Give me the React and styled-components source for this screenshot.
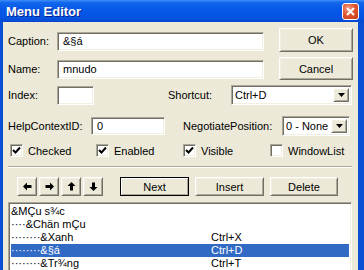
import styled, { createGlobalStyle } from 'styled-components';

const GlobalStyle = createGlobalStyle`
  body {
    margin: 0;
    background: #ece9d8;
    font-family: "Liberation Sans", Arial, sans-serif;
  }
`;

const menuItems = [
  { text: '&MÇu s¾c', level: 0, key: '' },
  { text: '&Chän mÇu', level: 1, key: '' },
  { text: '&Xanh', level: 2, key: 'Ctrl+X' },
  { text: '&§á', level: 2, key: 'Ctrl+D', selected: true },
  { text: '&Tr¾ng', level: 2, key: 'Ctrl+T' },
];

const ArrowIcon = ({ dir }) => {
  const rot = { left: 0, right: 180, up: 90, down: 270 }[dir];
  return (
    <svg width="9" height="9" viewBox="0 0 9 9" style={{ transform: `rotate(${rot}deg)` }}>
      <polygon points="0,4.5 4,0.5 4,3 8.5,3 8.5,6 4,6 4,8.5" fill="#000" />
    </svg>
  );
};

const DropArrow = () => (
  <svg width="7" height="4" viewBox="0 0 7 4">
    <polygon points="0,0 7,0 3.5,4" fill="#000" />
  </svg>
);

const Check = ({ checked, label }) => (
  <CheckItem>
    <Box>
      {checked && (
        <svg width="9" height="9" viewBox="0 0 9 9">
          <polyline points="1,4 3.5,6.5 8,1.5" fill="none" stroke="#000" strokeWidth="2" />
        </svg>
      )}
    </Box>
    {label}
  </CheckItem>
);

const Combo = ({ value, width }) => (
  <ComboBox $w={width}>
    <ComboText>{value}</ComboText>
    <ComboButton>
      <DropArrow />
    </ComboButton>
  </ComboBox>
);

const App = () => {
  return (
    <Window>
      <GlobalStyle />
      <TitleBar>
        <Title>Menu Editor</Title>
        <CloseButton>
          <svg width="9" height="9" viewBox="0 0 9 9">
            <path d="M1 1 L8 8 M8 1 L1 8" stroke="#fff" strokeWidth="2" />
          </svg>
        </CloseButton>
      </TitleBar>
      <Frame>
        <Top>
          <Fields>
            <Row>
              <Label $w={49}>Caption:</Label>
              <TextBox $w={207}>&amp;§á</TextBox>
            </Row>
            <Row>
              <Label $w={49}>Name:</Label>
              <TextBox $w={207}>mnudo</TextBox>
            </Row>
          </Fields>
          <ButtonCol>
            <Button $w={74} $h={24}>OK</Button>
            <Button $w={74} $h={23}>Cancel</Button>
          </ButtonCol>
        </Top>

        <Row $mt={5}>
          <Label $w={49}>Index:</Label>
          <TextBox $w={37} />
          <Label $w={63} $ml={74}>Shortcut:</Label>
          <Combo value="Ctrl+D" width={121} />
        </Row>

        <Row $mt={11}>
          <Label $w={83}>HelpContextID:</Label>
          <TextBox $w={74} $h={18}>0</TextBox>
          <Label $w={99} $ml={18}>NegotiatePosition:</Label>
          <Combo value="0 - None" width={68} />
        </Row>

        <CheckRow>
          <Check checked label="Checked" />
          <Check checked label="Enabled" />
          <Check checked label="Visible" />
          <Check label="WindowList" />
        </CheckRow>

        <Separator />

        <ToolRow>
          <ArrowGroup>
            <Button $w={20} $h={19}><ArrowIcon dir="left" /></Button>
            <Button $w={20} $h={19}><ArrowIcon dir="right" /></Button>
            <Button $w={20} $h={19}><ArrowIcon dir="up" /></Button>
            <Button $w={20} $h={19}><ArrowIcon dir="down" /></Button>
          </ArrowGroup>
          <ActionGroup>
            <Button $w={69} $h={19} $default>Next</Button>
            <Button $w={69} $h={19}>Insert</Button>
            <Button $w={68} $h={19}>Delete</Button>
          </ActionGroup>
        </ToolRow>

        <ListBox>
          {menuItems.map((item, i) => (
            <ListItem key={i} $selected={item.selected}>
              <ItemText>{'····'.repeat(item.level) + item.text}</ItemText>
              <ItemKey>{item.key}</ItemKey>
            </ListItem>
          ))}
        </ListBox>
      </Frame>
    </Window>
  );
};

const Window = styled.div`
  width: 364px;
  height: 270px;
  overflow: hidden;
  display: flex;
  flex-direction: column;
  font-size: 11px;
  color: #000;
`;

const TitleBar = styled.div`
  height: 22px;
  flex-shrink: 0;
  display: flex;
  align-items: center;
  justify-content: space-between;
  padding: 0 5px 0 6px;
  background: linear-gradient(
    to bottom,
    #3d8ff8 0%,
    #1266ec 12%,
    #0558e8 45%,
    #0552e0 85%,
    #0447cc 100%
  );
`;

const Title = styled.span`
  font-weight: bold;
  font-size: 13px;
  color: #fff;
  text-shadow: 1px 1px 0 #0a1f8c;
  padding-top: 1px;
`;

const CloseButton = styled.div`
  width: 15px;
  height: 15px;
  border: 1px solid #fff;
  border-radius: 3px;
  background: radial-gradient(circle at 35% 30%, #f0a08a 0%, #e0562f 45%, #c43a16 100%);
  display: flex;
  align-items: center;
  justify-content: center;
  margin-top: 1px;
`;

const Frame = styled.div`
  flex: 1;
  background: #ece9d8;
  border-left: 3px solid #0a4fd6;
  border-right: 6px solid #0a4fd6;
  padding: 6px 0 0 5px;
  display: flex;
  flex-direction: column;
  min-height: 0;
`;

const Top = styled.div`
  display: flex;
  align-items: flex-start;
`;

const Fields = styled.div`
  display: flex;
  flex-direction: column;
  gap: 8px;
  margin-top: 3px;
`;

const ButtonCol = styled.div`
  display: flex;
  flex-direction: column;
  gap: 5px;
  margin-left: 15px;
`;

const Row = styled.div`
  display: flex;
  align-items: center;
  height: 20px;
  margin-top: ${(p) => (p.$mt ? `${p.$mt}px` : '0')};
`;

const Label = styled.span`
  width: ${(p) => p.$w}px;
  margin-left: ${(p) => (p.$ml ? `${p.$ml}px` : '0')};
  flex-shrink: 0;
  white-space: nowrap;
`;

const sunken = `
  border: 1px solid;
  border-color: #aca899 #ffffff #ffffff #aca899;
  box-shadow: inset 1px 1px 0 #716f64, inset -1px -1px 0 #f1efe2;
  background: #fff;
  box-sizing: border-box;
`;

const raised = `
  border: 1px solid;
  border-color: #ffffff #716f64 #716f64 #ffffff;
  box-shadow: inset 1px 1px 0 #f1efe2, inset -1px -1px 0 #aca899;
  background: #ece9d8;
  box-sizing: border-box;
`;

const TextBox = styled.div`
  ${sunken}
  width: ${(p) => p.$w}px;
  height: ${(p) => p.$h || 19}px;
  padding: 0 0 0 5px;
  display: flex;
  align-items: center;
`;

const ComboBox = styled.div`
  ${sunken}
  width: ${(p) => p.$w}px;
  height: 20px;
  padding: 2px;
  display: flex;
  align-items: stretch;
`;

const ComboText = styled.span`
  flex: 1;
  display: flex;
  align-items: center;
  padding-left: 1px;
  white-space: nowrap;
  overflow: hidden;
`;

const ComboButton = styled.div`
  ${raised}
  width: 16px;
  display: flex;
  align-items: center;
  justify-content: center;
`;

const Button = styled.div`
  ${raised}
  width: ${(p) => p.$w}px;
  height: ${(p) => p.$h}px;
  display: flex;
  align-items: center;
  justify-content: center;
  ${(p) =>
    p.$default &&
    `
    outline: 1px solid #000;
    outline-offset: -1px;
    border-color: #000 #716f64 #716f64 #000;
    box-shadow: inset 1px 1px 0 #fff, inset -1px -1px 0 #aca899;
  `}
`;

const CheckRow = styled.div`
  display: grid;
  grid-template-columns: 86px 87px 87px 1fr;
  margin: 8px 0 0 2px;
  height: 13px;
`;

const CheckItem = styled.div`
  display: flex;
  align-items: center;
  gap: 5px;
`;

const Box = styled.div`
  ${sunken}
  width: 13px;
  height: 13px;
  display: flex;
  align-items: center;
  justify-content: center;
`;

const Separator = styled.div`
  margin: 9px 6px 0 0;
  height: 0;
  border-top: 1px solid #aca899;
  border-bottom: 1px solid #fff;
`;

const ToolRow = styled.div`
  display: flex;
  margin-top: 9px;
  padding-left: 9px;
`;

const ArrowGroup = styled.div`
  display: flex;
  gap: 2px;
`;

const ActionGroup = styled.div`
  display: flex;
  gap: 6px;
  margin-left: 17px;
`;

const ListBox = styled.div`
  ${sunken}
  width: 344px;
  height: 80px;
  margin-top: 6px;
  padding: 2px;
  flex-shrink: 0;
`;

const ListItem = styled.div`
  display: flex;
  height: 13px;
  line-height: 13px;
  white-space: nowrap;
  background: ${(p) => (p.$selected ? '#316ac5' : 'transparent')};
  color: ${(p) => (p.$selected ? '#fff' : '#000')};
`;

const ItemText = styled.span`
  width: 200px;
`;

const ItemKey = styled.span``;

export default App;
